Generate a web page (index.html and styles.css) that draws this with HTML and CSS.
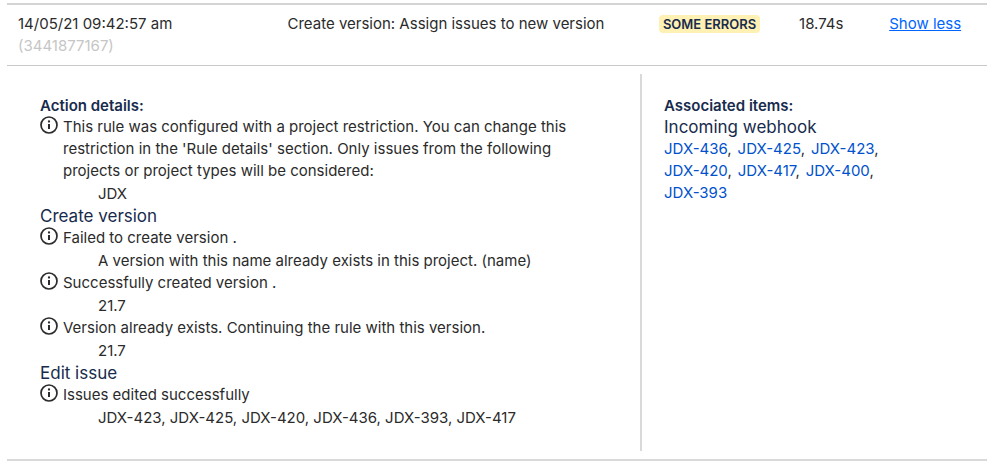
FILE: index.html
```html
<!DOCTYPE html>
<html lang="en">
<head>
    <meta charset="UTF-8" />
    <meta name="viewport" content="width=device-width, initial-scale=1" />
    <title>Audit log</title>
    <link rel="stylesheet" href="styles.css">
</head>
<body>
    <svg class="sprite" aria-hidden="true">
        <symbol id="info" viewBox="0 0 18 18">
            <circle cx="9" cy="9" r="8" fill="none" stroke="currentColor" stroke-width="1.7" />
            <circle cx="9" cy="5.5" r="1.15" fill="currentColor" />
            <path d="M9 8v5" fill="none" stroke="currentColor" stroke-width="2" />
        </symbol>
    </svg>

    <table class="audit-log">
        <colgroup>
            <col class="col-date">
            <col class="col-rule">
            <col class="col-status">
            <col class="col-duration">
            <col class="col-toggle">
        </colgroup>
        <tbody>
            <tr class="entry">
                <td>14/05/21 09:42:57 am<br><span class="entry-id">(3441877167)</span></td>
                <td>Create version: Assign issues to new version</td>
                <td><span class="lozenge">Some errors</span></td>
                <td>18.74s</td>
                <td><a class="toggle" href="#details">Show less</a></td>
            </tr>
            <tr class="entry-details" id="details">
                <td colspan="5">
                    <div class="panels">
                        <section class="actions">
                            <h2>Action details:</h2>
                            <div class="message">
                                <svg class="icon" aria-hidden="true"><use href="#info" /></svg>
                                <p>This rule was configured with a project restriction. You can change this restriction in the 'Rule details' section. Only issues from the following projects or project types will be considered:</p>
                            </div>
                            <p class="value">JDX</p>

                            <h3>Create version</h3>
                            <div class="message">
                                <svg class="icon" aria-hidden="true"><use href="#info" /></svg>
                                <p>Failed to create version .</p>
                            </div>
                            <p class="value">A version with this name already exists in this project. (name)</p>
                            <div class="message">
                                <svg class="icon" aria-hidden="true"><use href="#info" /></svg>
                                <p>Successfully created version .</p>
                            </div>
                            <p class="value">21.7</p>
                            <div class="message">
                                <svg class="icon" aria-hidden="true"><use href="#info" /></svg>
                                <p>Version already exists. Continuing the rule with this version.</p>
                            </div>
                            <p class="value">21.7</p>

                            <h3>Edit issue</h3>
                            <div class="message">
                                <svg class="icon" aria-hidden="true"><use href="#info" /></svg>
                                <p>Issues edited successfully</p>
                            </div>
                            <p class="value">JDX-423, JDX-425, JDX-420, JDX-436, JDX-393, JDX-417</p>
                        </section>

                        <section class="items">
                            <h2>Associated items:</h2>
                            <h3>Incoming webhook</h3>
                            <ul class="issues">
                                <li><a href="#JDX-436">JDX-436</a>,</li>
                                <li><a href="#JDX-425">JDX-425</a>,</li>
                                <li><a href="#JDX-423">JDX-423</a>,</li>
                                <li><a href="#JDX-420">JDX-420</a>,</li>
                                <li><a href="#JDX-417">JDX-417</a>,</li>
                                <li><a href="#JDX-400">JDX-400</a>,</li>
                                <li><a href="#JDX-393">JDX-393</a></li>
                            </ul>
                        </section>
                    </div>
                </td>
            </tr>
        </tbody>
    </table>
</body>
</html>
```

FILE: styles.css
```css
body {
    margin: 0;
    padding: 3px 12px 0 7px;
    background: #fff;
    color: #2b2b2b;
    font-family: Inter, "Liberation Sans", sans-serif;
    font-size: 15px;
    line-height: 22px;
}
h2, h3, p, ul {
    margin: 0;
    padding: 0;
}
.sprite {
    display: none;
}

/* Log table */
.audit-log {
    width: 100%;
    table-layout: fixed;
    border-collapse: collapse;
    border-bottom: 2px solid #d9d9d9;
}
.col-date {
    width: 27.5%;
}
.col-rule {
    width: 37.9%;
}
.col-status {
    width: 14.3%;
}
.col-duration {
    width: 9.2%;
}
.entry {
    border-top: 2px solid #d4d4d4;
    border-bottom: 1px solid #c8c8c8;
}
.entry td {
    padding: 8px 0 8px 11px;
    vertical-align: top;
    white-space: nowrap;
}
.entry-id {
    color: #c6c6c6;
}
.lozenge {
    display: inline-block;
    padding: 0 4px;
    border-radius: 4px;
    background: #fff0b3;
    color: #172b4d;
    font-size: 13px;
    font-weight: 600;
    line-height: 18px;
    text-transform: uppercase;
}
.toggle {
    color: #0065ff;
}

/* Expanded row */
.entry-details td {
    padding: 8px 0;
}
.panels {
    display: grid;
    grid-template-columns: 64.8fr 35.2fr;
}
.actions {
    padding: 21px 58px 22px 33px;
    border-right: 2px solid #d9d9d9;
}
.items {
    padding: 21px 100px 22px 22px;
}
h2 {
    color: #172b4d;
    font-size: 15px;
    font-weight: 600;
    line-height: 21px;
}
h3 {
    color: #172b4d;
    font-size: 17px;
    font-weight: 400;
    line-height: 22px;
}
.message {
    display: flex;
    gap: 5px;
}
.icon {
    flex: none;
    width: 18px;
    height: 18px;
}
.value {
    padding-left: 58px;
    line-height: 23px;
}
.issues {
    display: flex;
    flex-wrap: wrap;
    column-gap: 6px;
    list-style: none;
}
.issues a {
    color: #0052cc;
    text-decoration: none;
}
```
